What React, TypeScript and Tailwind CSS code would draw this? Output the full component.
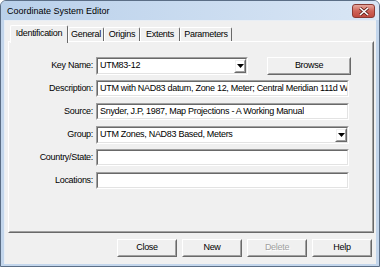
import { ReactNode } from "react";

// classic raised 3D edge (buttons, tabs panel)
function Raised({ className, children }: { className?: string; children?: ReactNode }) {
  return (
    <div className={"border border-t-white border-l-white border-r-[#696969] border-b-[#696969] " + (className ?? "")}>
      <div className="w-full h-full border border-t-[#f0f0f0] border-l-[#f0f0f0] border-r-[#a0a0a0] border-b-[#a0a0a0] flex items-center justify-center">
        {children}
      </div>
    </div>
  );
}

// classic sunken edge (text boxes, combos)
function Sunken({ className, children }: { className?: string; children?: ReactNode }) {
  return (
    <div className={"border border-t-[#a0a0a0] border-l-[#a0a0a0] border-r-white border-b-white " + (className ?? "")}>
      <div className="w-full h-full border border-t-[#696969] border-l-[#696969] border-r-[#e3e3e3] border-b-[#e3e3e3] bg-white flex items-center">
        {children}
      </div>
    </div>
  );
}

function Combo({ value, width }: { value: string; width: string }) {
  return (
    <Sunken className={width + " h-[18px]"}>
      <span className="flex-1 pl-[2px] whitespace-nowrap overflow-hidden">{value}</span>
      <Raised className="w-[12px] h-full">
        <svg width="7" height="4" viewBox="0 0 7 4">
          <path d="M0 0h7L3.5 4z" fill="#000" />
        </svg>
      </Raised>
    </Sunken>
  );
}

function TextBox({ value }: { value?: string }) {
  return (
    <Sunken className="w-[253px] h-[17px]">
      <span className="pl-[2px] whitespace-nowrap overflow-hidden">{value}</span>
    </Sunken>
  );
}

function Row({ label, children }: { label: string; children: ReactNode }) {
  return (
    <div className="flex items-center h-[23px]">
      <div className="w-[86px] text-right pr-[3px]">{label}</div>
      {children}
    </div>
  );
}

const tabs = ["General", "Origins", "Extents", "Parameters"];
const tabWidths = ["w-[36px]", "w-[36px]", "w-[40px]", "w-[52px]"];

export default function App() {
  return (
    <div className="w-[380px] h-[267px] bg-[#c3d6ec] border border-[#5b6e86] rounded-t-[6px] flex flex-col font-['Liberation_Sans',Arial,sans-serif] text-[9px] tracking-[-0.3px] text-black overflow-hidden">
      {/* title bar */}
      <div className="h-[19px] flex items-start justify-between bg-gradient-to-r from-[#b9d0ea] to-[#d9e6f5]">
        <div className="pl-[6px] pt-[6px] text-[9px] tracking-normal leading-none">Coordinate System Editor</div>
        <div className="mt-[3px] mr-[4px] w-[23px] h-[14px] rounded-[3px] border border-[#8a3a33] bg-gradient-to-b from-[#e5a89e] via-[#cf6358] to-[#c04a3f] flex items-center justify-center">
          <svg width="10" height="9" viewBox="0 0 10 9">
            <path d="M1 1l8 7M9 1L1 8" stroke="#5c1f1a" strokeWidth="3" />
            <path d="M1 1l8 7M9 1L1 8" stroke="#fff" strokeWidth="1.6" />
          </svg>
        </div>
      </div>

      {/* client area */}
      <div className="flex-1 mx-[3px] mb-[2px] bg-[#f0f0f0] border-l border-t border-[#e8eef5] flex flex-col pt-[6px] px-[3px]">
        {/* tabs */}
        <div className="flex items-end h-[16px] pl-[2px] -mb-[2px] relative z-10">
          <div className="w-[58px] h-[18px] bg-[#f0f0f0] border-t border-l border-white border-r border-r-[#696969] rounded-t-[2px] flex items-center justify-center pb-[1px]">
            Identification
          </div>
          {tabs.map((t, i) => (
            <div
              key={t}
              className={tabWidths[i] + " h-[14px] mb-[2px] border-t border-l border-white border-r border-r-[#696969] rounded-t-[2px] flex items-center justify-center"}
            >
              {t}
            </div>
          ))}
        </div>

        <Raised className="h-[192px] w-[366px]">
          <div className="w-full h-full flex flex-col pt-[11px]">
            <Row label="Key Name:">
              <Combo value="UTM83-12" width="w-[152px]" />
              <Raised className="ml-[19px] w-[84px] h-[18px]">Browse</Raised>
            </Row>
            <Row label="Description:">
              <TextBox value="UTM with NAD83 datum, Zone 12, Meter; Central Meridian 111d W" />
            </Row>
            <Row label="Source:">
              <TextBox value="Snyder, J.P, 1987, Map Projections - A Working Manual" />
            </Row>
            <Row label="Group:">
              <Combo value="UTM Zones, NAD83 Based, Meters" width="w-[253px]" />
            </Row>
            <Row label="Country/State:">
              <TextBox />
            </Row>
            <Row label="Locations:">
              <TextBox />
            </Row>
          </div>
        </Raised>

        <div className="flex justify-end gap-[5px] mt-[6px] pr-[1px]">
          <Raised className="w-[60px] h-[18px]">Close</Raised>
          <Raised className="w-[60px] h-[18px]">New</Raised>
          <Raised className="w-[60px] h-[18px]">
            <span className="text-[#a0a0a0] [text-shadow:1px_1px_0_#fff]">Delete</span>
          </Raised>
          <Raised className="w-[60px] h-[18px]">Help</Raised>
        </div>
      </div>
    </div>
  );
}
